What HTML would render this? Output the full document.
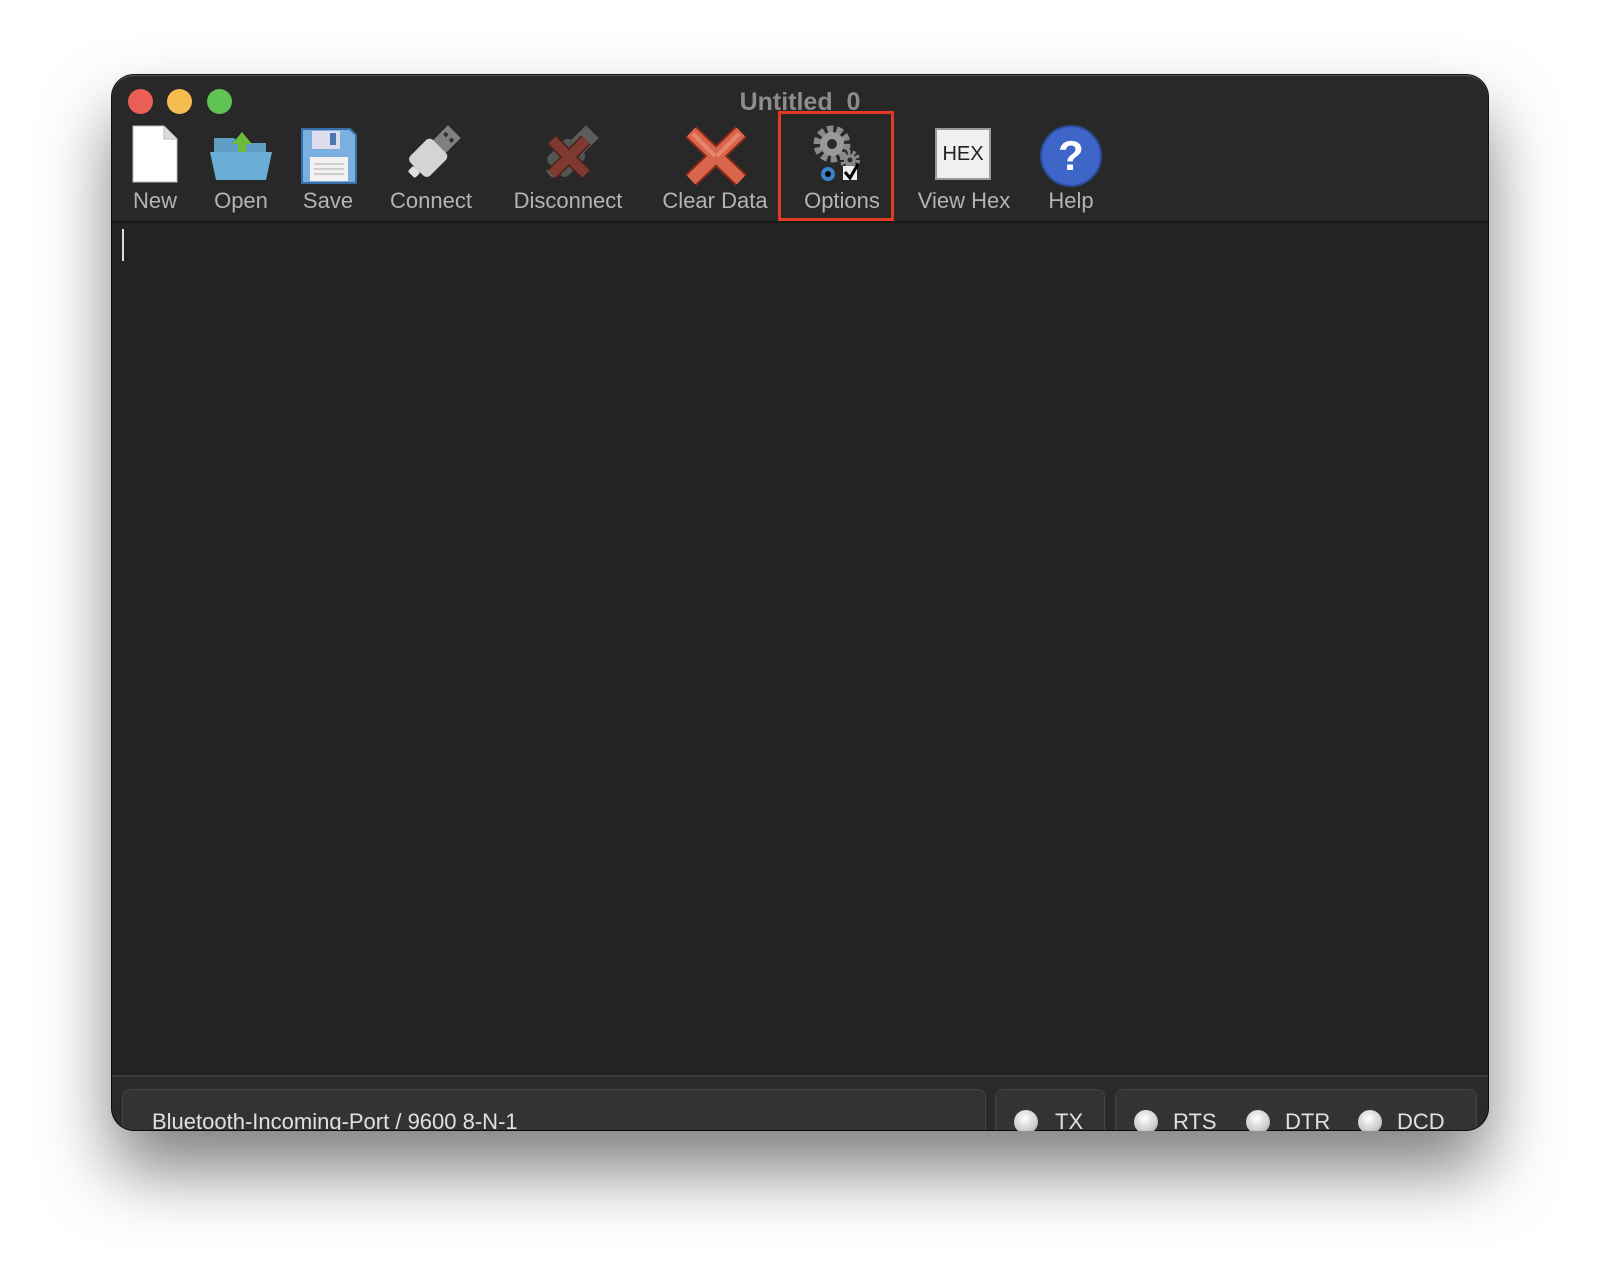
<!DOCTYPE html>
<html><head><meta charset="utf-8"><style>
html,body{margin:0;padding:0;width:1600px;height:1278px;background:#fff;overflow:hidden;font-family:"Liberation Sans",sans-serif;}
.win{position:absolute;left:112px;top:75px;width:1376px;height:1055px;background:#282828;border-radius:22px;overflow:hidden;box-shadow:0 40px 70px rgba(0,0,0,0.5),0 0 0 1px #111,inset 0 1px 0 #555;}
.dot{position:absolute;top:89px;width:25px;height:25px;border-radius:50%;}
.title{position:absolute;left:0;width:1600px;top:88px;text-align:center;font-weight:bold;font-size:25px;color:#8c8c8c;}
.lbl{position:absolute;top:188px;font-size:22px;color:#b4b4b4;transform:translateX(-50%);white-space:nowrap;}
.ic{position:absolute;}
.content{position:absolute;left:0;top:146px;width:1376px;height:854px;background:#232323;border-top:2px solid #181818;}
.status{position:absolute;left:0;top:1000px;width:1376px;height:60px;background:#2a2a2a;border-top:2px solid #3c3c3c;}
.pan{position:absolute;top:12px;height:60px;background:#333;border:1px solid #444;border-radius:8px;}
.st{position:absolute;font-size:22px;color:#e0e0e0;top:1109px;white-space:nowrap;}
.led{position:absolute;top:1110px;width:24px;height:24px;border-radius:50%;background:radial-gradient(circle at 45% 35%,#fff,#ccc 60%,#888);}
</style></head><body>
<div class="win">
<div class="content"></div>
<div class="status">
<div class="pan" style="left:10px;width:862px"></div>
<div class="pan" style="left:883px;width:108px"></div>
<div class="pan" style="left:1003px;width:360px"></div>
</div>
</div>
<div class="dot" style="left:128px;background:#ec5f57"></div>
<div class="dot" style="left:167px;background:#f5bd4f"></div>
<div class="dot" style="left:207px;background:#5fc454"></div>
<div class="title">Untitled_0</div>

<!-- New -->
<svg class="ic" style="left:130px;top:124px" width="50" height="60"><path d="M3 2H34L47 15V58H3Z" fill="#fff" stroke="#bbb"/><path d="M34 2V15H47" fill="#ddd" stroke="#bbb"/></svg>
<!-- Open -->
<svg class="ic" style="left:208px;top:124px" width="66" height="60"><path d="M6 14H26L30 19H58V28H6Z" fill="#5e9ec4"/><path d="M2 28H64L58 56H8Z" fill="#6aaed6"/><path d="M24 20L34 8L44 20H38V28H30V20Z" fill="#6cbb3c"/></svg>
<!-- Save -->
<svg class="ic" style="left:300px;top:127px" width="58" height="58"><path d="M2 2H50L56 8V56H2Z" fill="#7ab0e0" stroke="#3a6ea8" stroke-width="2"/><rect x="12" y="4" width="28" height="18" fill="#dde"/><rect x="30" y="6" width="6" height="12" fill="#4a78b0"/><rect x="10" y="30" width="38" height="24" fill="#f2f2f2"/><path d="M14 37H44M14 42H44M14 47H44" stroke="#aaa"/></svg>
<!-- Connect -->
<svg class="ic" style="left:400px;top:124px" width="62" height="62"><g transform="rotate(45 31 31)"><rect x="22" y="-2" width="18" height="22" fill="#808080"/><rect x="25" y="4" width="4" height="4" fill="#333"/><rect x="33" y="4" width="4" height="4" fill="#333"/><rect x="17" y="19" width="28" height="32" rx="5" fill="#d4d4d4"/><rect x="26" y="51" width="10" height="8" rx="2" fill="#e0e0e0"/></g></svg>
<!-- Disconnect -->
<svg class="ic" style="left:538px;top:124px" width="62" height="62"><g transform="rotate(45 31 31)"><rect x="22" y="-2" width="18" height="22" fill="#5c5c5c"/><rect x="17" y="19" width="28" height="32" rx="5" fill="#555"/><rect x="26" y="51" width="10" height="8" rx="2" fill="#5a5a5a"/></g><path d="M14 16L48 50M48 16L14 50" stroke="#4a2018" stroke-width="13"/><path d="M14 16L48 50M48 16L14 50" stroke="#7e3a2e" stroke-width="10"/></svg>
<!-- Clear -->
<svg class="ic" style="left:685px;top:124px" width="62" height="62"><path d="M6 8L56 56M56 8L6 56" stroke="#8a2a18" stroke-width="16"/><path d="M6 8L56 56M56 8L6 56" stroke="#d9664c" stroke-width="12"/><path d="M8 10L30 32M54 10L32 32" stroke="#e8876e" stroke-width="4"/></svg>
<!-- Options -->
<svg class="ic" style="left:810px;top:124px" width="60" height="60"><circle cx="22" cy="20" r="15" fill="none" stroke="#8a8a8a" stroke-width="7" stroke-dasharray="6 3.4"/><circle cx="22" cy="20" r="12" fill="#999"/><circle cx="22" cy="20" r="5" fill="#2a2a2a"/><circle cx="40" cy="36" r="8" fill="none" stroke="#888" stroke-width="4" stroke-dasharray="3 2"/><circle cx="40" cy="36" r="6" fill="#8a8a8a"/><circle cx="40" cy="36" r="2.5" fill="#2a2a2a"/><circle cx="18" cy="50" r="7" fill="#3b82c6"/><circle cx="18" cy="50" r="3" fill="#000"/><rect x="33" y="42" width="14" height="14" fill="#eee"/><path d="M35 48L40 54L48 40" stroke="#000" stroke-width="3" fill="none"/></svg>
<!-- Hex -->
<div class="ic" style="left:935px;top:128px;width:56px;height:52px;background:#f0f0f0;border:2px solid #999;box-sizing:border-box;font-size:20px;color:#222;text-align:center;line-height:48px">HEX</div>
<!-- Help -->
<svg class="ic" style="left:1039px;top:124px" width="64" height="64"><circle cx="32" cy="32" r="30" fill="#3e66c8" stroke="#2a4a9a" stroke-width="2"/><text x="32" y="46" text-anchor="middle" font-family="Liberation Sans" font-weight="bold" font-size="42" fill="#fff">?</text></svg>

<div class="lbl" style="left:155px">New</div>
<div class="lbl" style="left:241px">Open</div>
<div class="lbl" style="left:328px">Save</div>
<div class="lbl" style="left:431px">Connect</div>
<div class="lbl" style="left:568px">Disconnect</div>
<div class="lbl" style="left:715px">Clear Data</div>
<div class="lbl" style="left:842px">Options</div>
<div class="lbl" style="left:964px">View Hex</div>
<div class="lbl" style="left:1071px">Help</div>
<div style="position:absolute;left:778px;top:111px;width:110px;height:104px;border:3px solid #e33a26"></div>
<div style="position:absolute;left:122px;top:229px;width:2px;height:32px;background:#ddd"></div>

<div class="st" style="left:152px">Bluetooth-Incoming-Port / 9600 8-N-1</div>
<div class="led" style="left:1014px"></div><div class="st" style="left:1055px">TX</div>
<div class="led" style="left:1134px"></div><div class="st" style="left:1173px">RTS</div>
<div class="led" style="left:1246px"></div><div class="st" style="left:1285px">DTR</div>
<div class="led" style="left:1358px"></div><div class="st" style="left:1397px">DCD</div>
<style>.st,.led{clip-path:inset(0 0 calc(100% - 21px) 0);}</style>
</body></html>
